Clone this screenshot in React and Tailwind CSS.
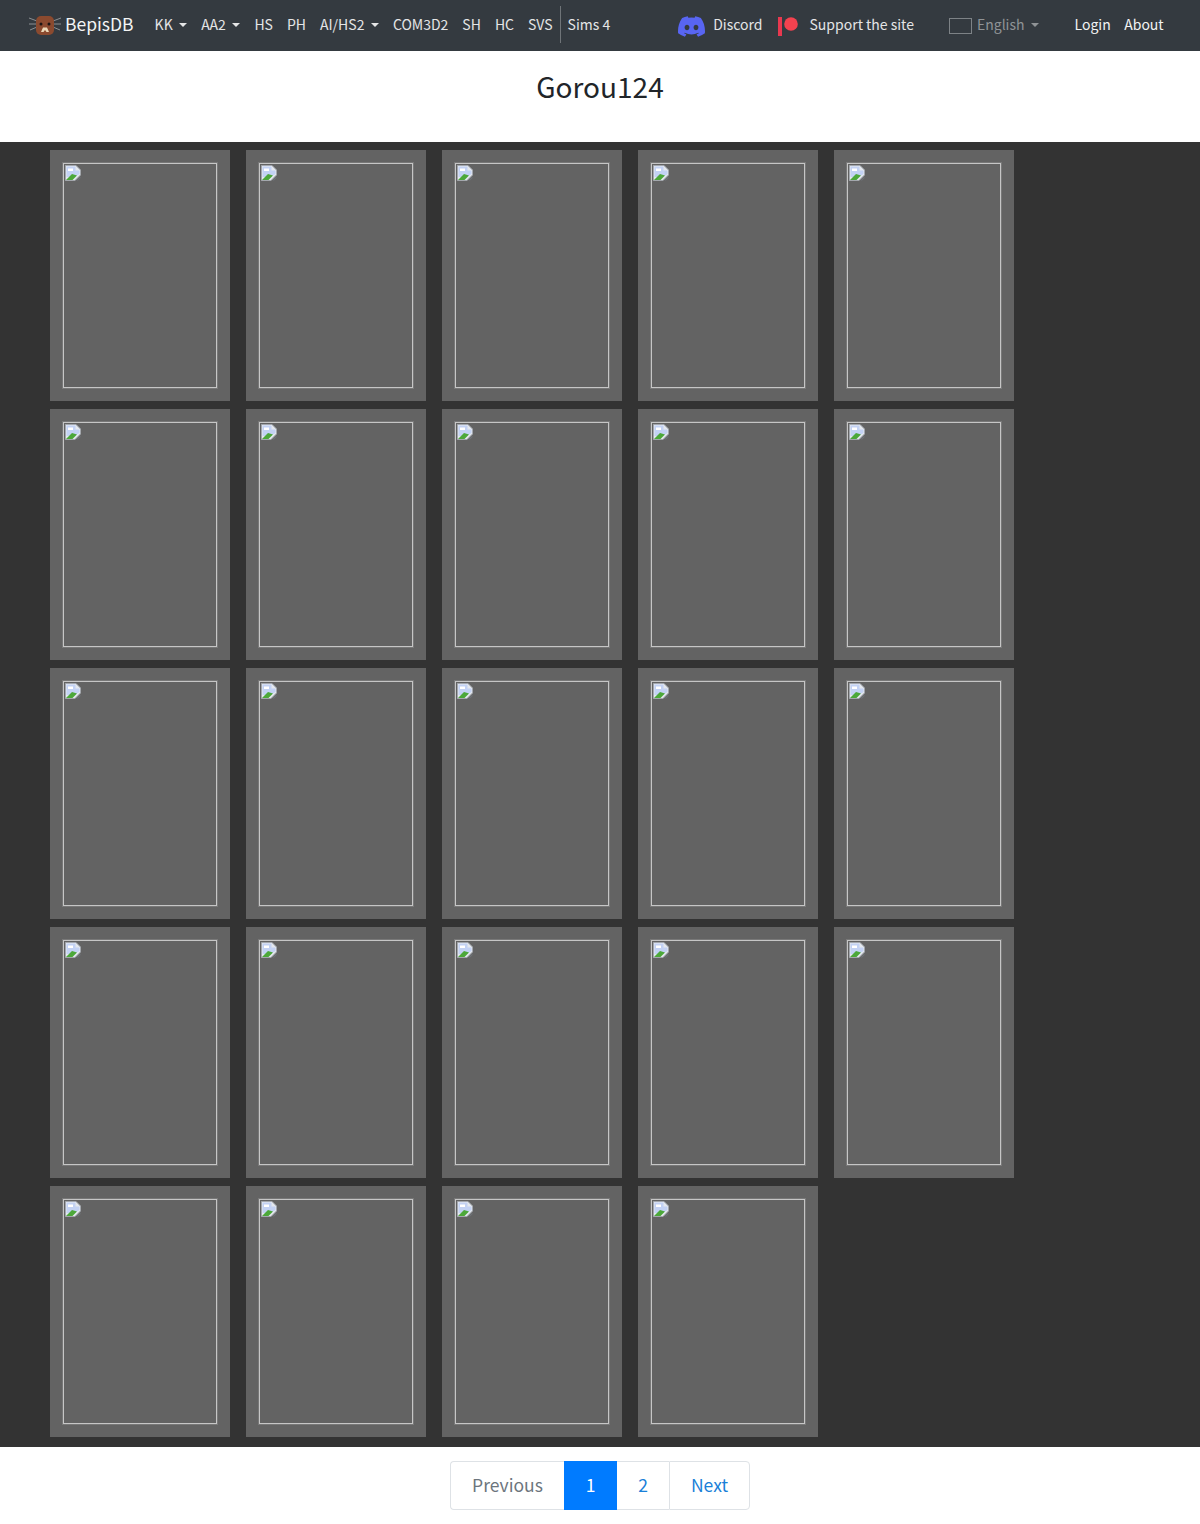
const font = "font-['Noto_Sans_CJK_JP','Noto_Sans',sans-serif]";
const cards = Array.from({ length: 24 }, (_, i) => i);

function Caret({ className = 'border-t-[#e5e6e7]' }) {
  return <span className={`ml-[6.5px] inline-block h-0 w-0 border-x-[4px] border-t-[4px] border-x-transparent ${className}`} />;
}

function BeaverLogo() {
  return (
    <svg width="32" height="24" viewBox="0 0 32 24" className="shrink-0">
      <g stroke="#8b8f92" strokeWidth="1" fill="none">
        <path d="M0 5 L8 8 M0 11 L8 11 M1 17 L8 14" />
        <path d="M32 5 L24 8 M32 11 L24 11 M31 17 L24 14" />
      </g>
      <rect x="7" y="3" width="18" height="19" rx="5" fill="#8b4a2f" />
      <circle cx="12" cy="11" r="1.5" fill="#1c1412" />
      <circle cx="20" cy="11" r="1.5" fill="#1c1412" />
      <path d="M12 19 L14 14.5 H18 L20 19 H17.5 L16 17 L14.5 19 Z" fill="#ecd9b8" />
    </svg>
  );
}

function DiscordLogo() {
  return (
    <svg width="27" height="21" viewBox="0 0 127.14 96.36" className="mt-[3px] shrink-0">
      <path
        fill="#5865f2"
        d="M107.7 8.07A105.15 105.15 0 0 0 81.47 0a72.06 72.06 0 0 0-3.36 6.83 97.68 97.68 0 0 0-29.11 0A72.37 72.37 0 0 0 45.64 0a105.89 105.89 0 0 0-26.25 8.09C2.79 32.65-1.71 56.6.54 80.21a105.73 105.73 0 0 0 32.17 16.15 77.7 77.7 0 0 0 6.89-11.11 68.42 68.42 0 0 1-10.85-5.18c.91-.66 1.8-1.34 2.66-2a75.57 75.57 0 0 0 64.32 0c.87.71 1.76 1.39 2.66 2a68.68 68.68 0 0 1-10.87 5.19 77 77 0 0 0 6.89 11.1 105.25 105.25 0 0 0 32.19-16.14c2.64-27.38-4.51-51.11-18.9-72.15ZM42.45 65.69C36.18 65.69 31 60 31 53s5-12.74 11.43-12.74S54 46 53.89 53s-5.05 12.69-11.44 12.69Zm42.24 0C78.41 65.69 73.25 60 73.25 53s5-12.74 11.44-12.74S96.23 46 96.12 53s-5.04 12.69-11.43 12.69Z"
      />
    </svg>
  );
}

function PatreonLogo() {
  return (
    <svg width="22" height="21" viewBox="0 0 22 21" className="mt-[3px] shrink-0">
      <rect x="0" y="1" width="4" height="19" fill="#e8384f" />
      <circle cx="13" cy="8" r="6.8" fill="#f4424f" />
    </svg>
  );
}

function BrokenImage() {
  return (
    <svg width="16" height="16" viewBox="0 0 16 16" className="shrink-0">
      <path d="M0.5 0.5 H11 L15.5 5 V10 L10 15.5 H0.5 Z" fill="#e4e8ee" stroke="#a3a7ad" />
      <path d="M1.5 1.5 H10.5 V5.5 H14.5 V9 L9.5 12 H1.5 Z" fill="#c3d2f4" />
      <path d="M3 3.5 H8 V6 H3 Z" fill="#ffffff" />
      <path d="M1 15 L7 9 L12 10.5 L7.5 15 Z" fill="#4ca83a" />
      <path d="M11.5 15.5 L15.5 11.5 V13 L13 15.5 Z" fill="#6f7378" />
    </svg>
  );
}

function Card() {
  return (
    <div className="h-[251px] w-[180px] bg-[#636363] p-[13px]">
      <div className="h-[225px] w-[154px] border border-[#c6c6c6] p-[1px] shadow-[0_0_0_1px_#787878]">
        <BrokenImage />
      </div>
    </div>
  );
}

export default function App() {
  return (
    <div className={`${font} min-h-[1524px] bg-white text-[14px]`}>
      <nav className="flex h-[51px] items-center bg-[#343a40] pb-[2px] pl-[29px] text-[#e4e5e6]">
        <a href="#" className="flex items-center">
          <BeaverLogo />
          <span className="ml-[4px] text-[17.5px] text-[#f4f5f5]">BepisDB</span>
        </a>
        <div className="ml-[21px] flex items-center gap-[14px]">
          <a href="#" className="flex items-center">KK<Caret /></a>
          <a href="#" className="flex items-center">AA2<Caret /></a>
          <a href="#">HS</a>
          <a href="#">PH</a>
          <a href="#" className="flex items-center">AI/HS2<Caret /></a>
          <a href="#">COM3D2</a>
          <a href="#">SH</a>
          <a href="#">HC</a>
          <a href="#">SVS</a>
        </div>
        <div className="ml-[7px] h-[37px] w-px bg-[#6f7478]" />
        <a href="#" className="ml-[7px]">Sims 4</a>
        <a href="#" className="ml-[68px] flex items-center">
          <DiscordLogo />
          <span className="ml-[8px]">Discord</span>
        </a>
        <a href="#" className="ml-[15px] flex items-center">
          <PatreonLogo />
          <span className="ml-[10px]">Support the site</span>
        </a>
        <div className="ml-[35px] flex items-center text-[#8f9396]">
          <span className="mt-[3px] h-[16px] w-[23px] border border-[#7d8286]" />
          <span className="ml-[5px]">English</span>
          <Caret className="border-t-[#8f9396]" />
        </div>
        <a href="#" className="ml-[35.5px] text-[#f2f3f3]">Login</a>
        <a href="#" className="ml-[13.5px] text-[#f2f3f3]">About</a>
      </nav>

      <div className="flex h-[91px] justify-center pt-[16px]">
        <h3 className="text-[28px] leading-[38px] text-[#212529]">Gorou124</h3>
      </div>

      <main className="bg-[#333333] pt-2 pr-[186px] pb-[10px] pl-[50px]">
        <div className="flex flex-wrap gap-x-4 gap-y-2">
          {cards.map((c) => (
            <Card key={c} />
          ))}
        </div>
      </main>

      <div className="flex justify-center pt-[14px]">
        <div className="flex h-[49px] w-[300px] text-[17.5px]">
          <a href="#" className="flex w-[114px] items-center justify-center rounded-l-[4px] border border-r-0 border-[#dee2e6] text-[#6c757d]">Previous</a>
          <a href="#" className="flex w-[53px] items-center justify-center bg-[#007bff] text-white">1</a>
          <a href="#" className="flex w-[52px] items-center justify-center border-y border-[#dee2e6] text-[#1a80d8]">2</a>
          <a href="#" className="flex w-[81px] items-center justify-center rounded-r-[4px] border border-[#dee2e6] text-[#1a80d8]">Next</a>
        </div>
      </div>
    </div>
  );
}
